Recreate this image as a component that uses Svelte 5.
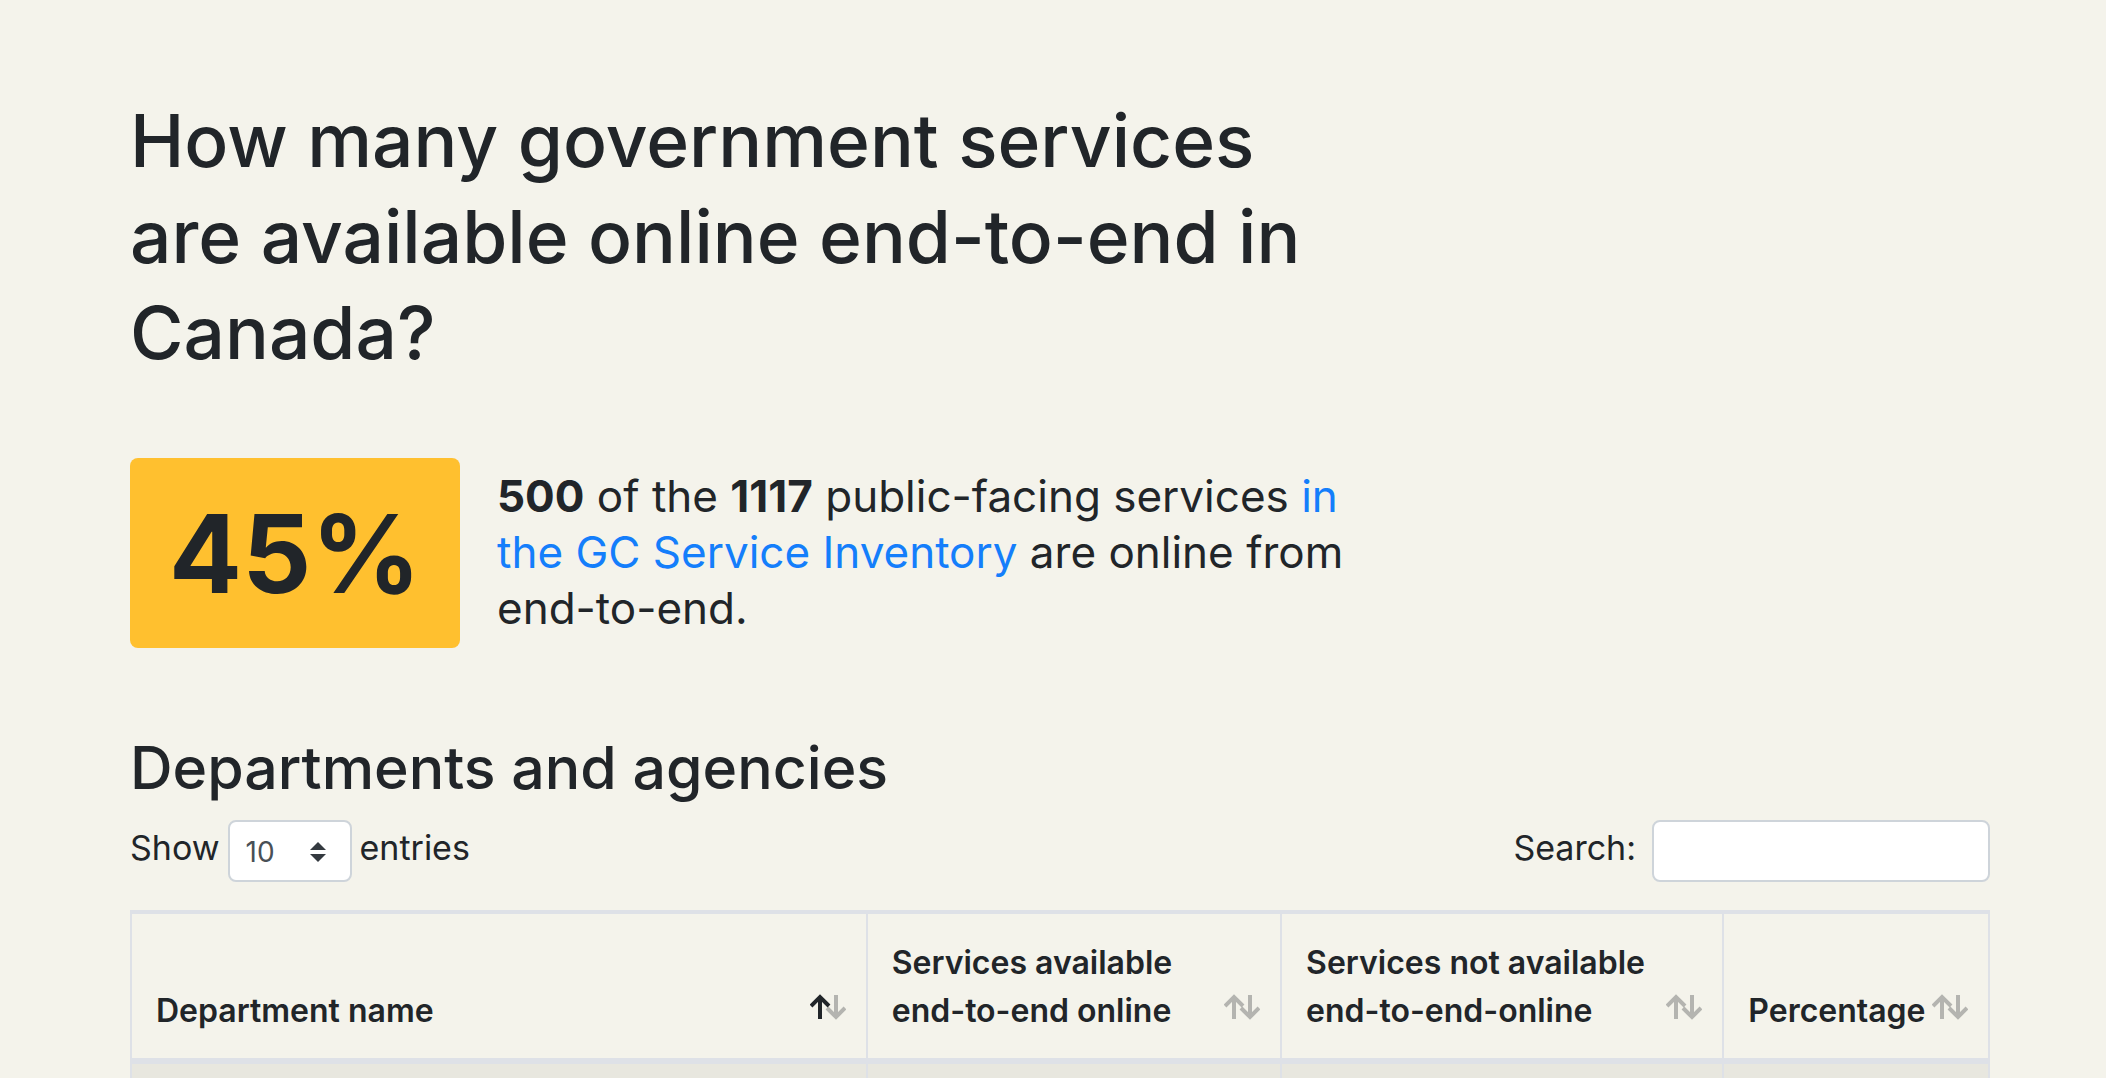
<script>
  const columns = [
    { key: 'name', lines: ['Department name'] },
    { key: 'online', lines: ['Services available', 'end-to-end online'] },
    { key: 'offline', lines: ['Services not available', 'end-to-end-online'] },
    { key: 'percentage', lines: ['Percentage'] },
  ];
  let sortKey = $state('name');
  let ascending = $state(true);
  let pageSize = $state(10);
  let query = $state('');

  function sortBy(key) {
    ascending = sortKey === key ? !ascending : true;
    sortKey = key;
  }
</script>

<main>
  <section class="intro">
    <h1>How many government services are available online end-to-end in Canada?</h1>
    <div class="summary">
      <strong class="score">45%</strong>
      <p>
        <strong>500</strong> of the <strong>1117</strong> public-facing services
        <a href="#inventory">in the GC Service Inventory</a> are online from end-to-end.
      </p>
    </div>
  </section>

  <section>
    <h2>Departments and agencies</h2>
    <div class="controls">
      <div class="control length">
        <label for="length">Show</label>
        <span class="select">
          <select id="length" bind:value={pageSize}>
            <option value={10}>10</option>
            <option value={25}>25</option>
            <option value={50}>50</option>
            <option value={100}>100</option>
          </select>
          <svg class="caret" viewBox="0 0 16 20" aria-hidden="true">
            <path d="M0 8 8 0l8 8zM0 12h16l-8 8z" />
          </svg>
        </span>
        <label for="length">entries</label>
      </div>
      <div class="control search">
        <label for="search">Search:</label>
        <input id="search" type="search" bind:value={query} />
      </div>
    </div>

    <table>
      <colgroup>
        {#each columns as column}
          <col class={column.key} />
        {/each}
      </colgroup>
      <thead>
        <tr>
          {#each columns as column}
            <th scope="col" aria-sort={sortKey === column.key ? (ascending ? 'ascending' : 'descending') : 'none'}>
              <button type="button" onclick={() => sortBy(column.key)}>
                <span>
                  {#each column.lines as line}<span class="line">{line}</span>{/each}
                </span>
                <svg class="sort" viewBox="0 0 36 26" aria-hidden="true">
                  <g class:active={sortKey === column.key && ascending}>
                    <path d="M10 25V3M1 12 10 3l9 9" />
                  </g>
                  <g class:active={sortKey === column.key && !ascending}>
                    <path d="M26 1v22M17 14l9 9 9-9" />
                  </g>
                </svg>
              </button>
            </th>
          {/each}
        </tr>
      </thead>
      <tbody>
        <tr>
          {#each columns as column}<td></td>{/each}
        </tr>
      </tbody>
    </table>
  </section>
</main>

<style>
  :global(body) {
    background: #f4f3eb;
    color: #212529;
    font-family: Inter, 'Liberation Sans', sans-serif;
  }

  main {
    padding: 93px 116px 0 130px;
  }

  .intro {
    max-width: 1220px;
  }

  h1,
  h2,
  p {
    margin: 0;
  }

  h1 {
    font-size: 73px;
    font-weight: 500;
    line-height: 96px;
  }

  .summary {
    display: flex;
    align-items: center;
    gap: 37px;
    margin: 77px 0 80px;
  }

  .score {
    flex: 0 0 330px;
    padding-top: 2px;
    border-radius: 8px;
    background: #ffc02f;
    font-size: 108px;
    font-weight: 700;
    line-height: 188px;
    text-align: center;
  }

  p {
    padding-bottom: 2px;
    font-size: 44px;
    line-height: 56px;
  }

  a {
    color: #147efb;
    text-decoration: none;
  }

  h2 {
    margin-bottom: 12px;
    font-size: 59px;
    font-weight: 500;
    line-height: 80px;
  }

  .controls {
    display: flex;
    justify-content: space-between;
    margin-bottom: 28px;
  }

  .control {
    display: flex;
    align-items: flex-start;
    font-size: 34px;
    line-height: 56px;
  }

  .length {
    gap: 8px;
  }

  .search {
    gap: 16px;
  }

  select,
  input {
    box-sizing: border-box;
    height: 62px;
    margin: 0;
    border: 2px solid #ced4da;
    border-radius: 8px;
    background: #fff;
    color: #495057;
    font-family: inherit;
    font-size: 28px;
    appearance: none;
  }

  .select {
    display: flex;
    position: relative;
  }

  select {
    width: 124px;
    padding: 2px 48px 0 16px;
  }

  input {
    width: 338px;
    padding: 0 16px;
  }

  .caret {
    position: absolute;
    top: 22px;
    right: 26px;
    width: 16px;
    height: 20px;
    fill: #343a40;
    pointer-events: none;
  }

  table {
    width: 100%;
    border-collapse: separate;
    border-spacing: 0;
    border: solid #dee1e7;
    border-width: 4px 0 0 2px;
    table-layout: fixed;
  }

  .name {
    width: 39.6%;
  }

  .online {
    width: 22.3%;
  }

  .offline {
    width: 23.8%;
  }

  .percentage {
    width: 14.3%;
  }

  th,
  td {
    border-right: 2px solid #dee1e7;
  }

  th {
    padding: 0;
    border-bottom: 6px solid #dee1e7;
    vertical-align: bottom;
  }

  button {
    display: flex;
    align-items: flex-end;
    justify-content: space-between;
    width: 100%;
    padding: 25px 20px 23px 24px;
    border: 0;
    background: none;
    color: inherit;
    font-family: inherit;
    font-size: 32px;
    font-weight: 600;
    line-height: 48px;
    text-align: left;
    cursor: pointer;
  }

  .line {
    display: block;
    white-space: nowrap;
  }

  .sort {
    flex: none;
    width: 36px;
    height: 26px;
    margin-bottom: 15px;
    fill: none;
    stroke: currentColor;
    stroke-width: 4;
  }

  .sort g {
    opacity: 0.3;
  }

  .sort g.active {
    opacity: 1;
  }

  td {
    height: 14px;
    padding: 0;
    background: #e8e7df;
  }
</style>
